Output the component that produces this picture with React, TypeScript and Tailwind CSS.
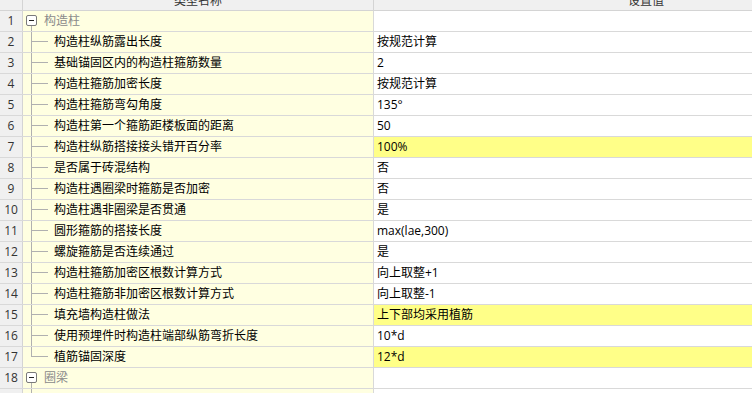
const rows: { name: string; value?: string; group?: boolean; hl?: boolean }[] = [
  { name: "构造柱", group: true },
  { name: "构造柱纵筋露出长度", value: "按规范计算" },
  { name: "基础锚固区内的构造柱箍筋数量", value: "2" },
  { name: "构造柱箍筋加密长度", value: "按规范计算" },
  { name: "构造柱箍筋弯勾角度", value: "135°" },
  { name: "构造柱第一个箍筋距楼板面的距离", value: "50" },
  { name: "构造柱纵筋搭接接头错开百分率", value: "100%", hl: true },
  { name: "是否属于砖混结构", value: "否" },
  { name: "构造柱遇圈梁时箍筋是否加密", value: "否" },
  { name: "构造柱遇非圈梁是否贯通", value: "是" },
  { name: "圆形箍筋的搭接长度", value: "max(lae,300)" },
  { name: "螺旋箍筋是否连续通过", value: "是" },
  { name: "构造柱箍筋加密区根数计算方式", value: "向上取整+1" },
  { name: "构造柱箍筋非加密区根数计算方式", value: "向上取整-1" },
  { name: "填充墙构造柱做法", value: "上下部均采用植筋", hl: true },
  { name: "使用预埋件时构造柱端部纵筋弯折长度", value: "10*d" },
  { name: "植筋锚固深度", value: "12*d", hl: true },
  { name: "圈梁", group: true },
]

function GroupBox() {
  return (
    <svg width="21" height="20" className="shrink-0">
      <rect x="3.5" y="4.5" width="10" height="10" rx="1.5" fill="#ffffff" stroke="#7a7a7a" />
      <line x1="6" y1="9.5" x2="11" y2="9.5" stroke="#222" />
      <line x1="8.5" y1="15" x2="8.5" y2="20" stroke="#b0b0b0" />
    </svg>
  )
}

function Branch({ last }: { last?: boolean }) {
  return (
    <svg width="31" height="20" className="shrink-0">
      <line x1="8.5" y1="0" x2="8.5" y2={last ? 10 : 20} stroke="#b0b0b0" />
      <line x1="8.5" y1="9.5" x2="25" y2="9.5" stroke="#b0b0b0" />
    </svg>
  )
}

export default function App() {
  return (
    <div
      className="w-[752px] h-[393px] overflow-hidden bg-white text-[12px] text-black"
      style={{ fontFamily: '"Open Sans", "Noto Sans CJK SC", sans-serif' }}
    >
      <div className="w-[918px]">
        {/* Header (scrolled, top cut off) */}
        <div className="flex h-[11px] bg-[#f0f0f0] border-b border-[#d4d4d4] overflow-hidden text-[#333]">
          <div className="w-[23px] shrink-0 border-r border-[#d4d4d4]" />
          <div className="w-[351px] shrink-0 border-r border-[#d4d4d4] flex justify-center">
            <span className="leading-[20px] -mt-[9px] h-[20px]">类型名称</span>
          </div>
          <div className="w-[544px] shrink-0 flex justify-center">
            <span className="leading-[20px] -mt-[9px] h-[20px]">设置值</span>
          </div>
        </div>

        {rows.map((r, i) => (
          <div key={i} className="flex h-[21px] border-b border-[#d9d9d9]">
            <div className="w-[23px] shrink-0 bg-[#f0f0f0] border-r border-[#d4d4d4] flex items-center justify-center text-[#333] leading-[20px]">
              {i + 1}
            </div>
            <div className="w-[351px] shrink-0 bg-[#ffffe1] border-r border-[#d9d9d9] flex items-center">
              {r.group ? (
                <>
                  <GroupBox />
                  <span className="text-[#8a8a8a] leading-[20px]">{r.name}</span>
                </>
              ) : (
                <>
                  <Branch last={i === 16} />
                  <span className="leading-[20px] whitespace-nowrap">{r.name}</span>
                </>
              )}
            </div>
            <div
              className={`w-[544px] shrink-0 flex items-center pl-[3px] leading-[20px] whitespace-nowrap ${
                r.hl ? "bg-[#ffff88]" : "bg-white"
              }`}
            >
              {r.value}
            </div>
          </div>
        ))}

        {/* partially visible next row */}
        <div className="flex h-[21px]">
          <div className="w-[23px] shrink-0 bg-[#f0f0f0] border-r border-[#d4d4d4]" />
          <div className="w-[351px] shrink-0 bg-[#ffffe1] border-r border-[#d9d9d9]">
            <svg width="21" height="20">
              <line x1="8.5" y1="0" x2="8.5" y2="20" stroke="#b0b0b0" />
            </svg>
          </div>
          <div className="w-[544px] shrink-0 bg-white" />
        </div>
      </div>
    </div>
  )
}
